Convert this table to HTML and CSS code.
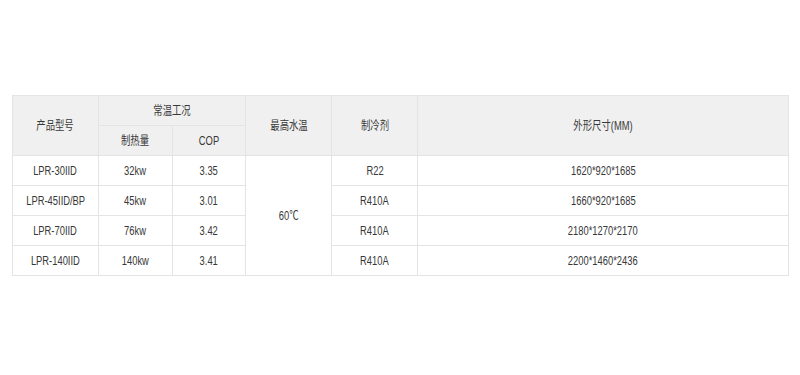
FILE: index.html
```html
<!DOCTYPE html>
<html lang="zh-CN">
<head>
<meta charset="utf-8">
<title>产品参数</title>
<link rel="stylesheet" href="styles.css">
</head>
<body>
<div class="wrap">
<table class="spec">
  <colgroup>
    <col class="c1"><col class="c2"><col class="c3"><col class="c4"><col class="c5"><col class="c6">
  </colgroup>
  <thead>
    <tr>
      <th rowspan="2"><span class="t">产品型号</span></th>
      <th colspan="2"><span class="t">常温工况</span></th>
      <th rowspan="2"><span class="t">最高水温</span></th>
      <th rowspan="2"><span class="t">制冷剂</span></th>
      <th rowspan="2"><span class="t">外形尺寸(MM)</span></th>
    </tr>
    <tr>
      <th><span class="t">制热量</span></th>
      <th><span class="t">COP</span></th>
    </tr>
  </thead>
  <tbody>
    <tr>
      <td><span class="t">LPR-30IID</span></td>
      <td><span class="t">32kw</span></td>
      <td><span class="t">3.35</span></td>
      <td rowspan="4"><span class="t">60℃</span></td>
      <td><span class="t">R22</span></td>
      <td><span class="t">1620*920*1685</span></td>
    </tr>
    <tr>
      <td><span class="t">LPR-45IID/BP</span></td>
      <td><span class="t">45kw</span></td>
      <td><span class="t">3.01</span></td>
      <td><span class="t">R410A</span></td>
      <td><span class="t">1660*920*1685</span></td>
    </tr>
    <tr>
      <td><span class="t">LPR-70IID</span></td>
      <td><span class="t">76kw</span></td>
      <td><span class="t">3.42</span></td>
      <td><span class="t">R410A</span></td>
      <td><span class="t">2180*1270*2170</span></td>
    </tr>
    <tr>
      <td><span class="t">LPR-140IID</span></td>
      <td><span class="t">140kw</span></td>
      <td><span class="t">3.41</span></td>
      <td><span class="t">R410A</span></td>
      <td><span class="t">2200*1460*2436</span></td>
    </tr>
  </tbody>
</table>
</div>
</body>
</html>
```
FILE: styles.css
```css
html, body {
  margin: 0;
  padding: 0;
  background: #ffffff;
}
body {
  font-family: "Liberation Sans", Arial, "Noto Sans CJK SC", sans-serif;
  font-size: 12px;
  color: #383838;
}
.wrap {
  padding: 95px 12px 0 12px;
}
.spec {
  width: 776px;
  table-layout: fixed;
  border-collapse: collapse;
}
.c1 { width: 86px; }
.c2 { width: 74px; }
.c3 { width: 73px; }
.c4 { width: 86px; }
.c5 { width: 86px; }
.c6 { width: 371px; }
.spec th,
.spec td {
  border: 1px solid #e4e4e4;
  height: 29px;
  padding: 0;
  text-align: center;
  vertical-align: middle;
  font-weight: normal;
  line-height: 14px;
}
.spec th {
  background: #f0f0f0;
}
.t {
  display: inline-block;
  transform: scaleX(0.78);
  white-space: nowrap;
}
```
